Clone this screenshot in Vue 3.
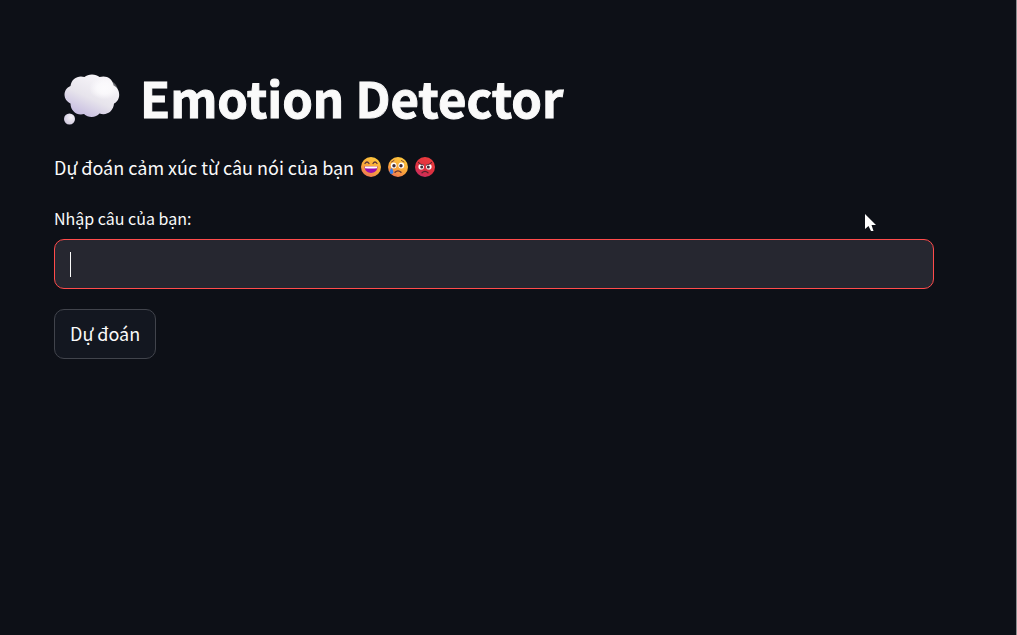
<script setup>
import { ref } from 'vue'

const sentence = ref('')
</script>

<template>
  <div class="app">
    <main class="content">
      <h1 class="title">
        <svg class="thought" viewBox="0 0 56 52" aria-hidden="true">
          <defs>
            <linearGradient id="cloud" x1="0.75" y1="0.15" x2="0.25" y2="1">
              <stop offset="0" stop-color="#f6f4f8" />
              <stop offset="0.5" stop-color="#e7e4ec" />
              <stop offset="1" stop-color="#c3b8df" />
            </linearGradient>
            <radialGradient id="shine" cx="0.62" cy="0.4" r="0.42">
              <stop offset="0" stop-color="#fcfbfd" />
              <stop offset="0.5" stop-color="#fcfbfd" stop-opacity="0.8" />
              <stop offset="1" stop-color="#fcfbfd" stop-opacity="0" />
            </radialGradient>
            <radialGradient id="bubble" cx="0.65" cy="0.35" r="0.7">
              <stop offset="0" stop-color="#f6f4f8" />
              <stop offset="1" stop-color="#cfc8de" />
            </radialGradient>
          </defs>
          <path
            fill="url(#cloud)"
            d="M20.500 3C24-0.500 32-0.500 35.500 3C42 1 48.500 4 49.500 11.500C57 14.500 57 26.500 50 29.500C49.500 37 43 42 35.500 39.500C32 44 24 44 20 40C13 42 6.500 37 6.500 29.500C-1.500 26 -1.500 15 6.500 12C7.500 4.500 14 1 20.500 3Z"
          />
          <ellipse cx="36" cy="17" rx="18" ry="13" fill="url(#shine)" />
          <circle cx="5.500" cy="45" r="5.500" fill="url(#bubble)" />
        </svg>
        <span>Emotion Detector</span>
      </h1>

      <p class="intro">
        <span>Dự đoán cảm xúc từ câu nói của bạn</span>
        <svg class="face" viewBox="0 0 20 20" role="img" aria-label="Cười">
          <defs>
            <linearGradient id="happy" x1="0.8" y1="0" x2="0.3" y2="1">
              <stop offset="0" stop-color="#ffcb3d" />
              <stop offset="0.6" stop-color="#f8a43b" />
              <stop offset="1" stop-color="#ee7455" />
            </linearGradient>
          </defs>
          <circle cx="10" cy="10" r="10" fill="url(#happy)" />
          <path d="M4 6.500Q6 3.500 8 6.500M12 6.500Q14 3.500 16 6.500" fill="none" stroke="#5b3440" stroke-width="1.300" stroke-linecap="round" />
          <path d="M3.500 9.500H16.500C16.500 18 3.500 18 3.500 9.500Z" fill="#9b0faa" />
          <path d="M4 9.500H16V11.200Q10 12 4 11.200Z" fill="#fff" />
        </svg>
        <svg class="face" viewBox="0 0 20 20" role="img" aria-label="Buồn">
          <circle cx="10" cy="10" r="10" fill="url(#happy)" />
          <path d="M3.500 5L6 3.500M13.500 3.500L16 5" stroke="#7e4a35" stroke-width="1" stroke-linecap="round" />
          <circle cx="5.700" cy="8.500" r="2.900" fill="#fff" />
          <circle cx="13.300" cy="8.500" r="2.900" fill="#fff" />
          <circle cx="6" cy="8.700" r="1.700" fill="#412b38" />
          <circle cx="13" cy="8.700" r="1.700" fill="#412b38" />
          <path d="M7 15.300Q10 12.500 13 15.300" fill="none" stroke="#5b3037" stroke-width="1.300" stroke-linecap="round" />
          <path d="M3.500 11C6 14 5.800 17 3.500 17C1.200 17 1 14 3.500 11Z" fill="#367de9" />
        </svg>
        <svg class="face" viewBox="0 0 20 20" role="img" aria-label="Giận">
          <defs>
            <linearGradient id="angry" x1="0.8" y1="0" x2="0.3" y2="1">
              <stop offset="0" stop-color="#ef3d3e" />
              <stop offset="0.6" stop-color="#dc303f" />
              <stop offset="1" stop-color="#ca2e61" />
            </linearGradient>
          </defs>
          <circle cx="10" cy="10" r="10" fill="url(#angry)" />
          <circle cx="6.200" cy="9.800" r="2.800" fill="#fff" />
          <circle cx="13.800" cy="9.800" r="2.800" fill="#fff" />
          <circle cx="6.700" cy="10" r="1.500" fill="#412b38" />
          <circle cx="13.300" cy="10" r="1.500" fill="#412b38" />
          <path d="M3.500 5.500Q5 7.500 8.500 8M16.500 5.500Q15 7.500 11.500 8M7 15.800Q10 13 13 15.800" fill="none" stroke="#54242e" stroke-width="1.200" stroke-linecap="round" />
        </svg>
      </p>

      <form class="form" @submit.prevent>
        <label class="label" for="sentence">Nhập câu của bạn:</label>
        <div class="field">
          <input id="sentence" v-model="sentence" class="input" type="text" autocomplete="off" />
          <span v-if="!sentence" class="caret" aria-hidden="true"></span>
        </div>
        <button class="button" type="submit">Dự đoán</button>
      </form>
    </main>

    <svg class="pointer" viewBox="0 0 11 18" aria-hidden="true">
      <path d="M0 0V15L3.500 12L6 17H8.500L6.500 11H11Z" fill="#fff" />
    </svg>
  </div>
</template>

<style>
body {
  margin: 0;
  background: #0d1017;
}
</style>

<style scoped>
.app {
  position: relative;
  box-sizing: border-box;
  min-height: 100vh;
  padding: 64px 82px 64px 54px;
  border-right: 1px solid #8c8d90;
  background: #0d1017;
  color: #fafafa;
  font-family: "Noto Sans CJK SC", "Noto Sans", sans-serif;
  font-size: 18px;
  line-height: 30px;
}

.title {
  display: flex;
  align-items: flex-start;
  gap: 20px;
  margin: 0;
  padding-left: 10px;
  font-size: 49px;
  font-weight: 700;
  line-height: 66px;
  -webkit-text-stroke: 1px #fafafa;
}

.thought {
  flex: none;
  width: 56px;
  height: 52px;
  margin-top: 10px;
  -webkit-text-stroke: 0;
}

.intro {
  display: flex;
  align-items: center;
  gap: 7px;
  margin: 22px 0 0;
}

.face {
  flex: none;
  width: 20px;
  height: 20px;
}

.form {
  display: flex;
  flex-direction: column;
  align-items: flex-start;
  margin-top: 21px;
}

.label {
  margin-bottom: 6px;
  font-size: 16px;
}

.field {
  position: relative;
  width: 100%;
}

.input {
  display: block;
  box-sizing: border-box;
  width: 100%;
  height: 50px;
  padding: 0 15px;
  border: 1px solid #ff4b4b;
  border-radius: 10px;
  outline: none;
  background: #262730;
  color: #fafafa;
  font: inherit;
}

.caret {
  position: absolute;
  top: 13px;
  left: 16px;
  width: 1px;
  height: 25px;
  background: #fafafa;
  pointer-events: none;
}

.button {
  margin-top: 20px;
  padding: 8px 15px 10px;
  border: 1px solid #41444c;
  border-radius: 10px;
  background: #131720;
  color: #fafafa;
  font: inherit;
}

.pointer {
  position: absolute;
  top: 214px;
  left: 865px;
  width: 11px;
  height: 18px;
  pointer-events: none;
}
</style>
